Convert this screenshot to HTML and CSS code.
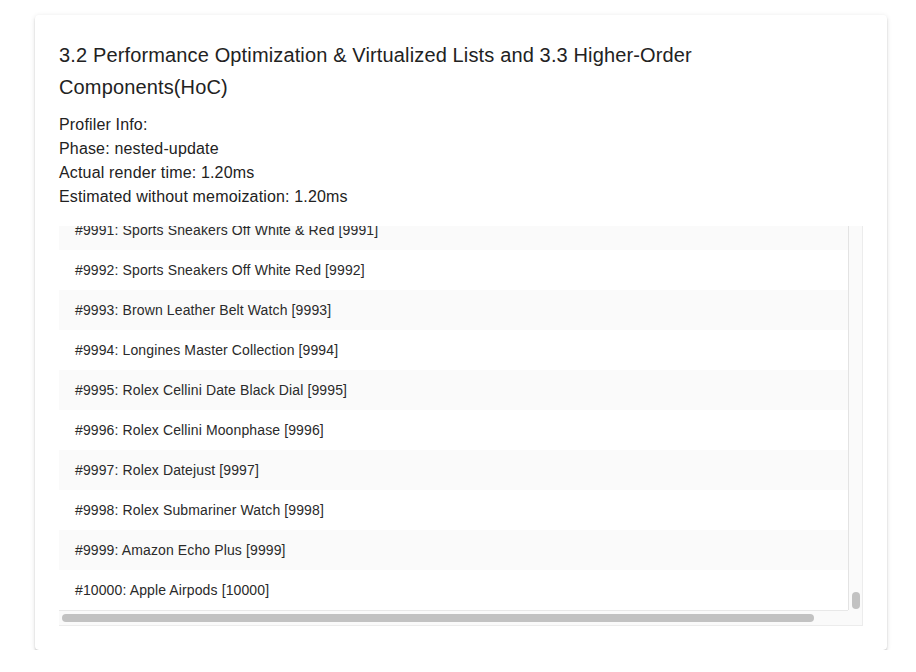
FILE: index.html
```html
<!DOCTYPE html>
<html>
<head>
<meta charset="utf-8">
<link rel="stylesheet" href="styles.css">
</head>
<body>
<div class="page">
  <div class="card">
    <h2 class="title">3.2 Performance Optimization &amp; Virtualized Lists and 3.3 Higher-Order<br>Components(HoC)</h2>
    <div class="info">
      <p>Profiler Info:</p>
      <p>Phase: nested-update</p>
      <p>Actual render time: 1.20ms</p>
      <p>Estimated without memoization: 1.20ms</p>
    </div>
    <div class="scrollbox">
      <div class="viewport">
        <ul class="list">
          <li class="row odd">#9991: Sports Sneakers Off White &amp; Red [9991]</li>
          <li class="row">#9992: Sports Sneakers Off White Red [9992]</li>
          <li class="row odd">#9993: Brown Leather Belt Watch [9993]</li>
          <li class="row">#9994: Longines Master Collection [9994]</li>
          <li class="row odd">#9995: Rolex Cellini Date Black Dial [9995]</li>
          <li class="row">#9996: Rolex Cellini Moonphase [9996]</li>
          <li class="row odd">#9997: Rolex Datejust [9997]</li>
          <li class="row">#9998: Rolex Submariner Watch [9998]</li>
          <li class="row odd">#9999: Amazon Echo Plus [9999]</li>
          <li class="row">#10000: Apple Airpods [10000]</li>
        </ul>
      </div>
      <div class="vtrack"><div class="vthumb"></div></div>
      <div class="htrack"><div class="hthumb"></div></div>
      <div class="corner"></div>
    </div>
  </div>
</div>
</body>
</html>
```
FILE: styles.css
```css
html, body {
  margin: 0;
  padding: 0;
  background: #fff;
}
body {
  font-family: "Liberation Sans", Arial, Helvetica, sans-serif;
  color: rgba(0, 0, 0, 0.87);
}
.page {
  padding: 15px 29px 0 35px;
}
.card {
  width: 852px;
  box-sizing: border-box;
  padding: 24px;
  background: #fff;
  border-radius: 4px;
  box-shadow: 0 3px 1px -2px rgba(0,0,0,0.2), 0 2px 2px 0 rgba(0,0,0,0.14), 0 1px 5px 0 rgba(0,0,0,0.12);
}
.title {
  margin: 0 0 10px;
  font-size: 20px;
  font-weight: 400;
  line-height: 32px;
  letter-spacing: 0.14px;
  color: #222;
}
.info p {
  margin: 0;
  font-size: 16px;
  line-height: 24px;
  letter-spacing: 0.16px;
  color: #222;
}
.info {
  margin-bottom: 17px;
}
.scrollbox {
  display: grid;
  grid-template-columns: 789px 15px;
  grid-template-rows: 384px 16px;
}
.viewport {
  overflow: hidden;
  grid-column: 1;
  grid-row: 1;
}
.list {
  list-style: none;
  margin: -16px 0 0;
  padding: 0;
  width: 828px;
}
.row {
  height: 40px;
  line-height: 40px;
  padding-left: 16px;
  font-size: 14px;
  letter-spacing: 0.12px;
  color: #2a2a2a;
  background: #fff;
  white-space: nowrap;
}
.row.odd {
  background: #fafafa;
}
.vtrack {
  grid-column: 2;
  grid-row: 1;
  background: #fafafa;
  border-left: 1px solid #e3e3e3;
  border-right: 1px solid #ececec;
  display: flex;
  flex-direction: column;
  align-items: center;
}
.vthumb {
  margin-top: auto;
  margin-bottom: 1px;
  width: 8px;
  height: 17px;
  border-radius: 4px;
  background: #c2c2c2;
}
.htrack {
  grid-column: 1;
  grid-row: 2;
  background: #fafafa;
  border-top: 1px solid #e8e8e8;
  border-bottom: 1px solid #ececec;
  display: flex;
  align-items: center;
}
.hthumb {
  margin-left: 3px;
  width: 752px;
  height: 8px;
  border-radius: 4px;
  background: #c2c2c2;
}
.corner {
  grid-column: 2;
  grid-row: 2;
  background: #fafafa;
  border-right: 1px solid #ececec;
  border-bottom: 1px solid #ececec;
}
```
